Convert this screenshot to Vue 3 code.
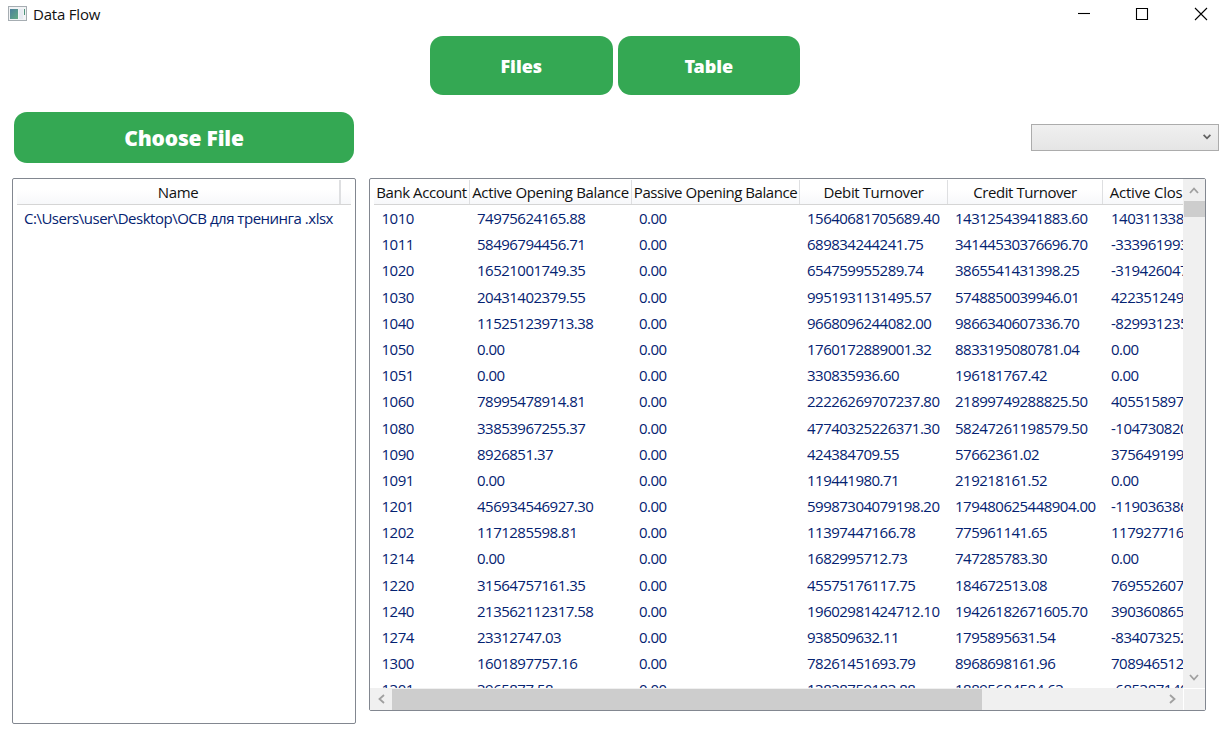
<script setup>
const columns = [
  { label: 'Bank Account', key: 'h1' },
  { label: 'Active Opening Balance', key: 'h2' },
  { label: 'Passive Opening Balance', key: 'h3' },
  { label: 'Debit Turnover', key: 'h4' },
  { label: 'Credit Turnover', key: 'h5' },
  { label: 'Active Closing Balance', key: 'h6' },
]
const rows = [
  ['1010', '74975624165.88', '0.00', '15640681705689.40', '14312543941883.60', '1403113387971.68'],
  ['1011', '58496794456.71', '0.00', '689834244241.75', '34144530376696.70', '-33396199337998.24'],
  ['1020', '16521001749.35', '0.00', '654759955289.74', '3865541431398.25', '-3194260474359.16'],
  ['1030', '20431402379.55', '0.00', '9951931131495.57', '5748850039946.01', '4223512493929.11'],
  ['1040', '115251239713.38', '0.00', '9668096244082.00', '9866340607336.70', '-82993123541.32'],
  ['1050', '0.00', '0.00', '1760172889001.32', '8833195080781.04', '0.00'],
  ['1051', '0.00', '0.00', '330835936.60', '196181767.42', '0.00'],
  ['1060', '78995478914.81', '0.00', '22226269707237.80', '21899749288825.50', '405515897327.11'],
  ['1080', '33853967255.37', '0.00', '47740325226371.30', '58247261198579.50', '-10473082004952.83'],
  ['1090', '8926851.37', '0.00', '424384709.55', '57662361.02', '375649199.90'],
  ['1091', '0.00', '0.00', '119441980.71', '219218161.52', '0.00'],
  ['1201', '456934546927.30', '0.00', '59987304079198.20', '179480625448904.00', '-119036386822778.50'],
  ['1202', '1171285598.81', '0.00', '11397447166.78', '775961141.65', '11792771623.94'],
  ['1214', '0.00', '0.00', '1682995712.73', '747285783.30', '0.00'],
  ['1220', '31564757161.35', '0.00', '45575176117.75', '184672513.08', '76955260766.02'],
  ['1240', '213562112317.58', '0.00', '19602981424712.10', '19426182671605.70', '390360865423.98'],
  ['1274', '23312747.03', '0.00', '938509632.11', '1795895631.54', '-834073252.40'],
  ['1300', '1601897757.16', '0.00', '78261451693.79', '8968698161.96', '70894651288.99'],
  ['1301', '3965877.58', '0.00', '13838759183.88', '18895684584.63', '-6853871403.17'],
]
</script>

<template>
  <div class="window">
    <header class="titlebar">
      <svg class="appicon" width="19" height="16" viewBox="0 0 19 16">
        <defs>
          <linearGradient id="scr" x1="0" y1="0" x2="1" y2="1">
            <stop offset="0" stop-color="#4c7f9c" />
            <stop offset="1" stop-color="#63ab83" />
          </linearGradient>
        </defs>
        <rect x=".5" y=".5" width="18" height="14" fill="#f1f3f5" stroke="#a6adb2" />
        <rect x="2" y="3" width="8" height="10" fill="url(#scr)" />
        <rect x="11" y="3" width="4" height="10" fill="#e6eaf1" />
        <rect x="16" y="3" width="1" height="6" fill="#4e947b" />
      </svg>
      <span class="title">Data Flow</span>
      <div class="controls">
        <svg width="12" height="12" viewBox="0 0 12 12"><path d="M0 5.5H12" /></svg>
        <svg width="12" height="12" viewBox="0 0 12 12"><path d="M.5 .5H11.5V11.5H.5Z" /></svg>
        <svg width="12" height="12" viewBox="0 0 12 12"><path d="M0 0L12 12M12 0L0 12" /></svg>
      </div>
    </header>

    <nav class="tabs">
      <button class="green">Files</button>
      <button class="green">Table</button>
    </nav>

    <div class="toolbar">
      <button class="green choose">Choose File</button>
      <div class="combo">
        <svg width="8" height="6" viewBox="0 0 8 6"><path d="M.6 .9L4 4.3L7.4 .9" /></svg>
      </div>
    </div>

    <main class="panels">
      <section class="files">
        <div class="fhead"><span class="fname">Name</span><span class="frest"></span></div>
        <div class="file"><span>C:\Users\user\Desktop\ОСВ для тренинга .xlsx</span></div>
      </section>

      <section class="tablebox">
        <div class="view">
          <div class="grid head">
            <div v-for="c in columns" :key="c.key"><span :class="c.key">{{ c.label }}</span></div>
          </div>
          <div v-for="r in rows" :key="r[0]" class="grid row">
            <div v-for="(v, i) in r" :key="i">{{ v }}</div>
          </div>
        </div>
        <div class="vbar">
          <svg width="10" height="7" viewBox="0 0 10 7"><path d="M1 6L5 1.5L9 6" /></svg>
          <i class="vthumb"></i>
          <svg class="end" width="10" height="7" viewBox="0 0 10 7"><path d="M1 1L5 5.5L9 1" /></svg>
        </div>
        <div class="hbar">
          <svg width="7" height="10" viewBox="0 0 7 10"><path d="M6 1L1.5 5L6 9" /></svg>
          <i class="hthumb"></i>
          <svg class="end" width="7" height="10" viewBox="0 0 7 10"><path d="M1 1L5.5 5L1 9" /></svg>
        </div>
        <div class="corner"></div>
      </section>
    </main>
  </div>
</template>

<style>
body { margin: 0; background: #fff; overflow: hidden; }
</style>

<style scoped>
* { box-sizing: border-box; }
.window { width: 1227px; height: 730px; background: #fff; overflow: hidden; color: #111; font: 15px/20px "Open Sans", "Noto Sans", sans-serif; }
.titlebar { height: 35px; display: flex; align-items: flex-start; padding: 6px 20px 0 8px; }
.title { margin: -2px 0 0 6px; letter-spacing: -0.2px; }
.controls { margin: 2px 0 0 auto; display: flex; gap: 46px; }
.controls svg { fill: none; stroke: #000; stroke-width: 1.1; overflow: visible; }
.controls svg:last-child { margin-left: 1px; }
.tabs { display: flex; justify-content: center; gap: 5px; height: 60px; padding: .5px 0 0 3px; }
.green { border: 0; padding: 1px 0 0; background: #34a853; color: #fff; border-radius: 13px; font-family: "Noto Sans", "Open Sans", sans-serif; font-weight: 900; font-size: 18px; letter-spacing: -0.05px; width: 182.5px; height: 59px; }
.choose { width: 340px; height: 51px; font-size: 21px; letter-spacing: -0.2px; }
.toolbar { display: flex; justify-content: space-between; padding: 17px 8px 0 14px; height: 83px; }
.combo { margin-top: 12px; width: 188px; height: 27px; border: 1px solid #acacac; background: linear-gradient(#f0f0f0, #e5e5e5); display: flex; align-items: center; justify-content: flex-end; padding-right: 7px; }
.combo svg { fill: none; stroke: #606060; stroke-width: 1.8; margin-top: -2px; }
.panels { display: flex; align-items: flex-start; gap: 13px; padding-left: 12px; }
.files { width: 344px; height: 546px; border: 1.5px solid #828790; border-radius: 2px; padding: 1px 4px; }
.fhead { display: flex; height: 25px; border-bottom: 1px solid #d5d5d5; background: linear-gradient(#fff 40%, #f7f8fa); }
.fname { width: 324px; text-align: center; padding-top: 2px; border-right: 2px solid #dedfe1; letter-spacing: -0.4px; }
.file { color: #042271; padding: 3px 0 0 7px; white-space: nowrap; letter-spacing: -0.49px; }
.tablebox { width: 837px; height: 533px; border: 1.5px solid #828790; border-radius: 2px; display: grid; grid-template-columns: 813px 22px; grid-template-rows: 509px 22px; }
.view { overflow: hidden; padding: 1px 0 0 4px; }
.grid { display: grid; grid-template-columns: 96px 162px 168px 148px 155px 160px; white-space: nowrap; }
.head { height: 25px; border-bottom: 1px solid #d5d5d5; background: linear-gradient(#fff 40%, #f7f8fa); }
.head div { display: flex; justify-content: center; padding-top: 2px; border-right: 1px solid #dedfe1; }
.h1 { letter-spacing: -0.42px; }
.h2 { letter-spacing: -0.34px; }
.h3 { letter-spacing: -0.45px; }
.h4 { letter-spacing: -0.4px; }
.h5 { letter-spacing: -0.45px; }
.h6 { letter-spacing: -0.2px; margin-left: 5px; }
.row { height: 26.2px; color: #042271; letter-spacing: -0.51px; }
.row div { padding: 3px 0 0 7px; }
.row div:first-child { padding-left: 7.5px; }
.row div:last-child { padding-left: 8px; letter-spacing: -0.49px; }
.vbar, .hbar { display: flex; align-items: center; background: #f0f0f0; }
.vbar svg, .hbar svg { fill: none; stroke: #a0a0a0; stroke-width: 1.8; }
.vbar { flex-direction: column; padding: 8px 0 7px; }
.vthumb { width: 21px; height: 16px; margin-top: 7px; background: #cdcdcd; }
.hbar { padding: 0 7px 0 8px; }
.hthumb { height: 21px; width: 590px; margin-left: 7px; background: #cdcdcd; }
.vbar .end { margin-top: auto; }
.hbar .end { margin-left: auto; }
.corner { border-left: 1px solid #fff; border-top: 1px solid #fff; background: #f0f0f0; }
</style>
